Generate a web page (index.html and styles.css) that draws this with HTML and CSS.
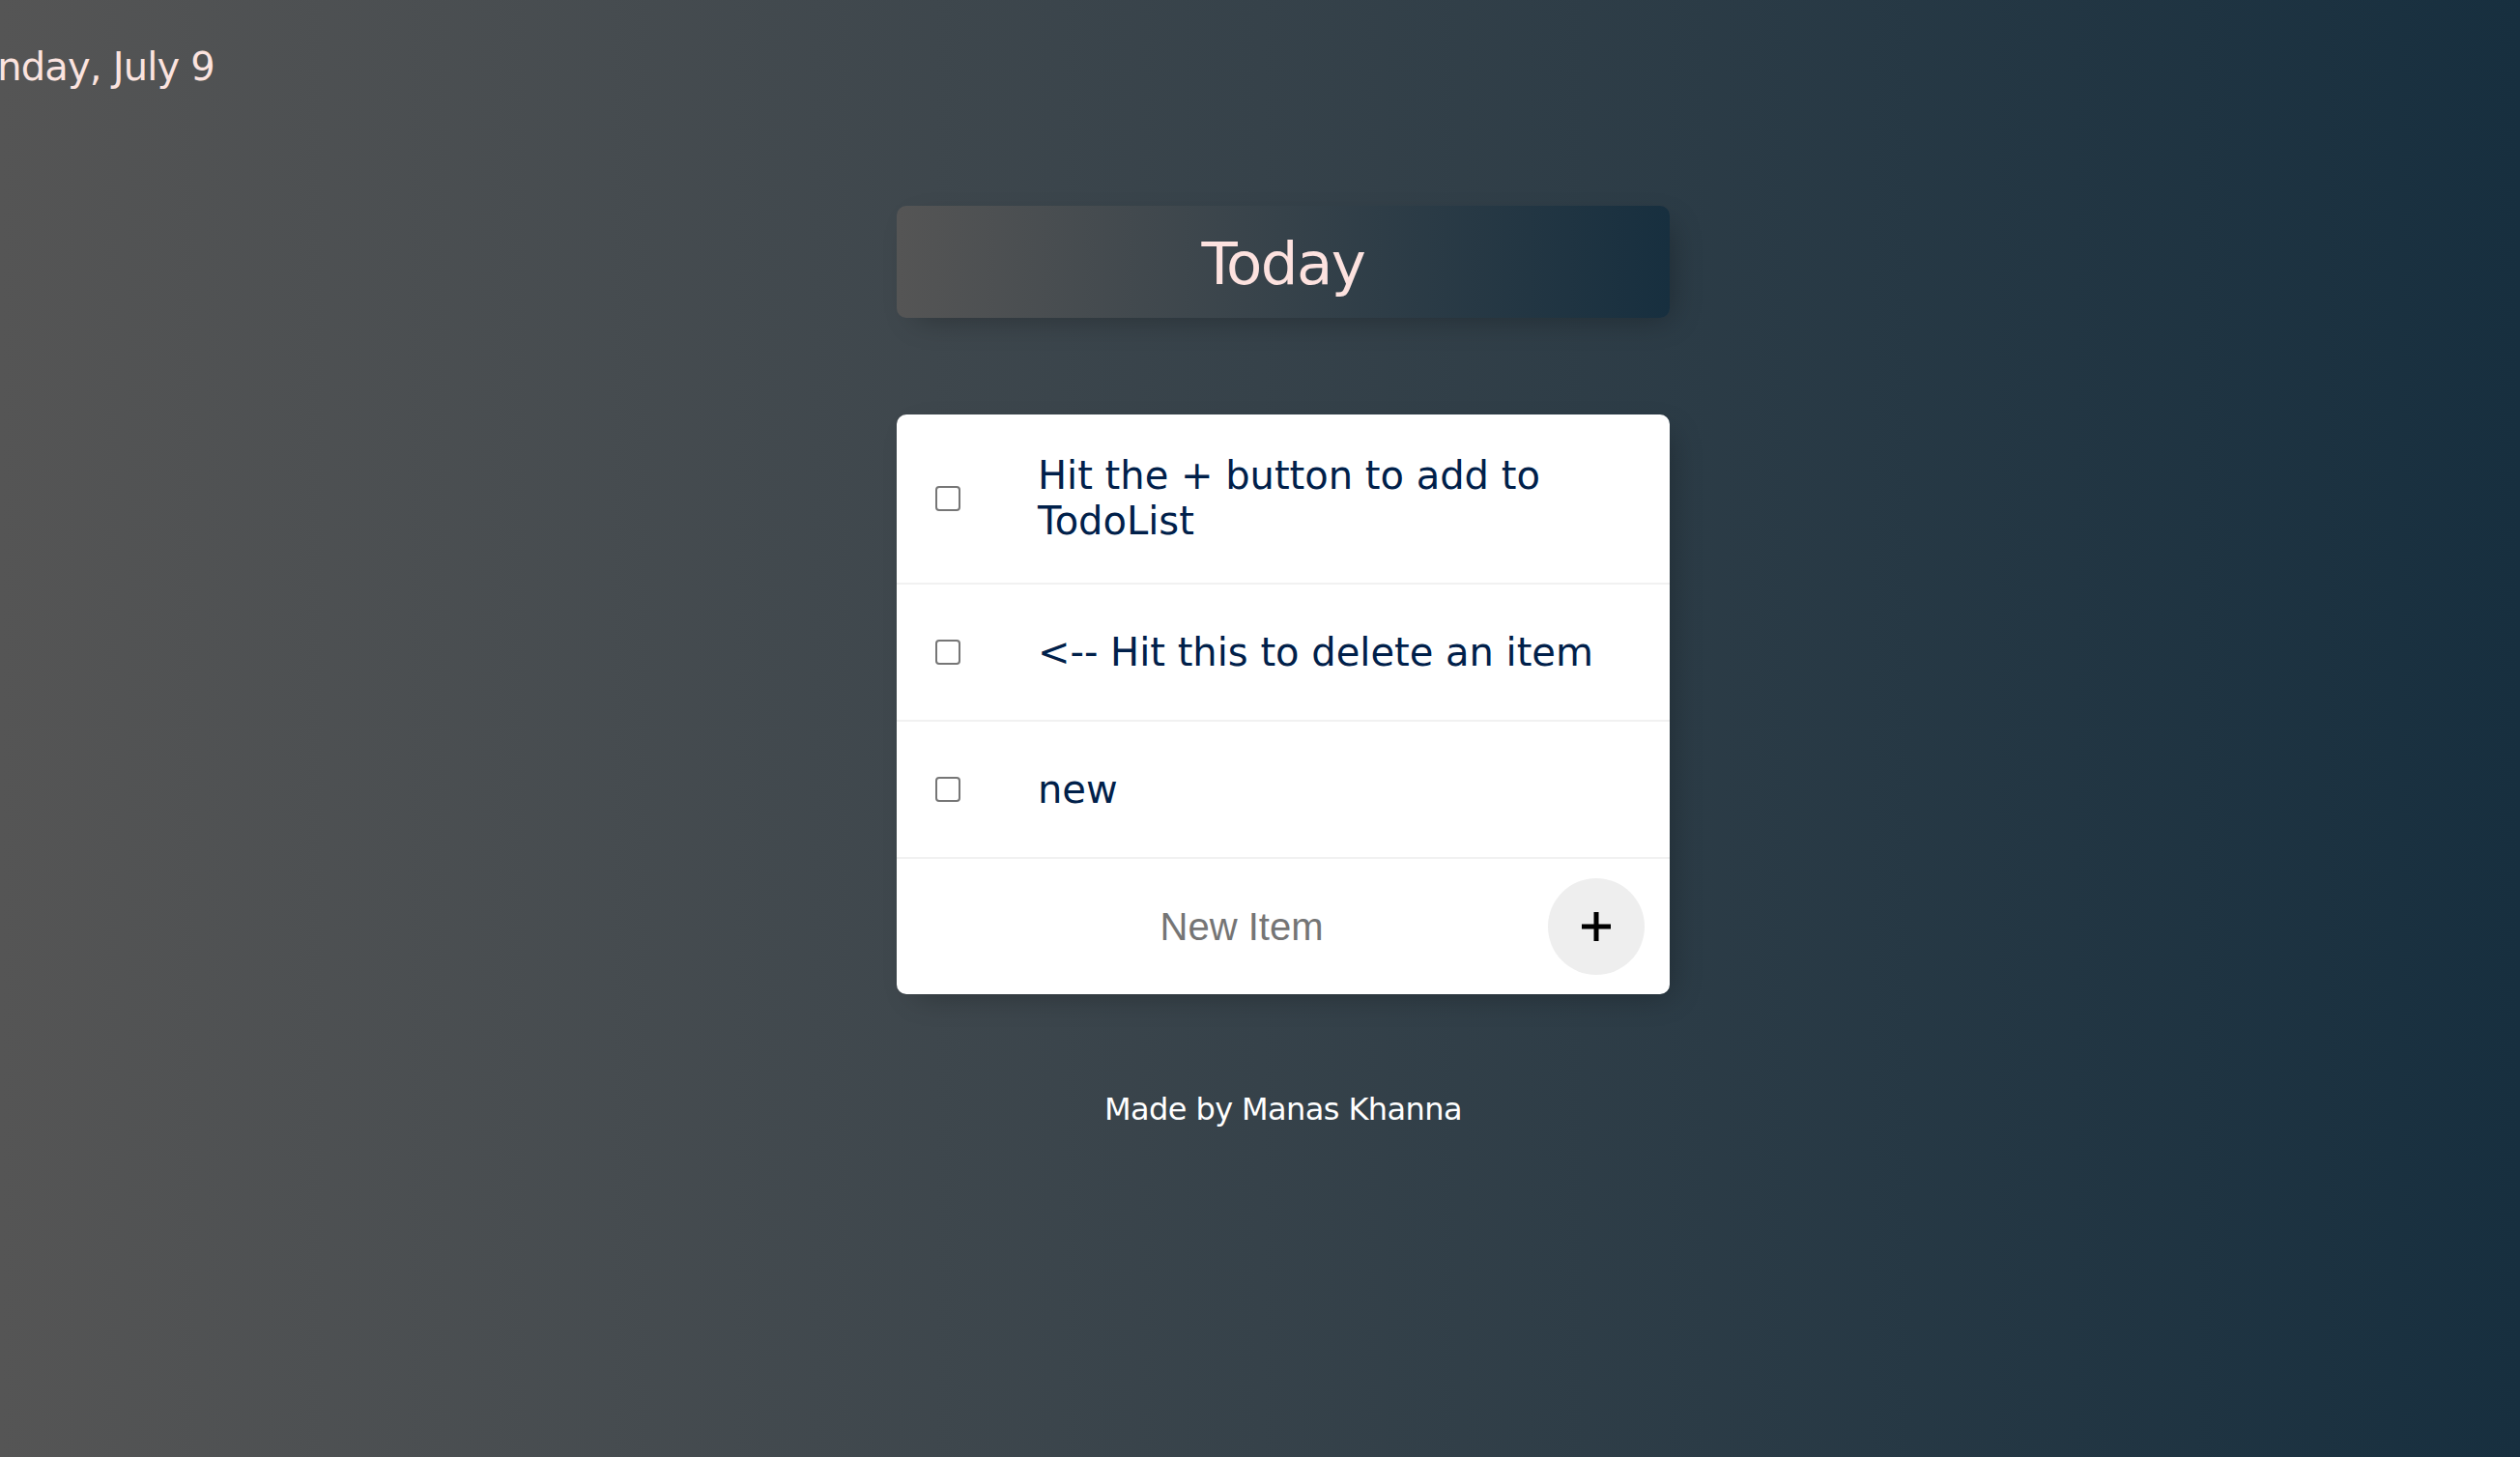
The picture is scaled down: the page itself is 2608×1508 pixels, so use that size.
FILE: index.html
```html
<!DOCTYPE html>
<html lang="en">
<head>
<meta charset="utf-8">
<title>To-Do List</title>
<link rel="stylesheet" href="styles.css">
</head>
<body>
  <div class="date">Sunday, July 9</div>
  <main class="page">
    <div class="box heading">
      <h1 class="heading-title">Today</h1>
    </div>
    <div class="box list">
      <div class="item">
        <input class="check" type="checkbox">
        <p class="item-text">Hit the + button to add to TodoList</p>
      </div>
      <div class="item">
        <input class="check" type="checkbox">
        <p class="item-text">&lt;-- Hit this to delete an item</p>
      </div>
      <div class="item">
        <input class="check" type="checkbox">
        <p class="item-text">new</p>
      </div>
      <form class="item item-form">
        <input class="new-item" type="text" name="newItem" placeholder="New Item" autocomplete="off">
        <button class="add-btn" type="button" aria-label="Add">
          <svg class="plus" width="30" height="30" viewBox="0 0 30 30"><path d="M15 0V30M0 15H30" stroke="#000" stroke-width="5" fill="none"/></svg>
        </button>
      </form>
    </div>
    <footer class="footer">Made by Manas Khanna</footer>
  </main>
</body>
</html>
```

FILE: styles.css
```css
html {
  min-height: 100%;
  background: linear-gradient(to right, #555555, #172f3f);
}

body {
  margin: 0;
  min-height: 100vh;
  font-family: "DejaVu Sans", "Noto Sans", sans-serif;
  overflow: hidden;
}

.date {
  margin: 46px 0 0 -52px;
  font-size: 40px;
  line-height: 47px;
  letter-spacing: -0.8px;
  color: #fbe3df;
  white-space: nowrap;
}

.page {
  padding-left: 48px;
}

.box {
  width: 800px;
  margin: 0 auto;
  border-radius: 10px;
  box-shadow: 10px 10px 30px -10px rgba(0, 0, 0, 0.3);
}

.heading {
  margin-top: 120px;
  background: linear-gradient(to right, #555555, #172f3f);
  text-align: center;
}

.heading-title {
  margin: 0;
  padding: 22px 0 18px;
  font-size: 61px;
  line-height: 76px;
  font-weight: 400;
  letter-spacing: -1.5px;
  color: #fde2df;
}

.list {
  margin-top: 100px;
  background: #ffffff;
}

.item {
  display: flex;
  align-items: center;
  min-height: 140px;
  border-bottom: 2px solid #f1f1f1;
}

.item:last-child {
  border-bottom: 0;
}

.check {
  appearance: none;
  -webkit-appearance: none;
  flex: none;
  box-sizing: border-box;
  width: 26px;
  height: 26px;
  margin: 0 40px;
  border: 2px solid #767676;
  border-radius: 4px;
  background: #fff;
}

.item-text {
  margin: 0;
  padding: 40px;
  font-size: 40px;
  line-height: 47px;
  color: #00204a;
}

.item-form {
  margin-left: 40px;
}

.new-item {
  flex: 1;
  min-width: 0;
  height: 120px;
  padding: 0;
  border: none;
  outline: none;
  background: transparent;
  text-align: center;
  font-family: "Liberation Sans", Arial, sans-serif;
  font-size: 40px;
  color: #333;
}

.new-item::placeholder {
  color: #757575;
}

.add-btn {
  flex: none;
  display: flex;
  align-items: center;
  justify-content: center;
  width: 100px;
  height: 100px;
  margin-right: 26px;
  padding: 0;
  border: 0;
  border-radius: 50%;
  background: #eeeeee;
}

.plus {
  display: block;
}

.footer {
  margin-top: 100px;
  text-align: center;
  font-size: 32px;
  line-height: 38px;
  letter-spacing: -0.6px;
  color: #ffffff;
}
```
